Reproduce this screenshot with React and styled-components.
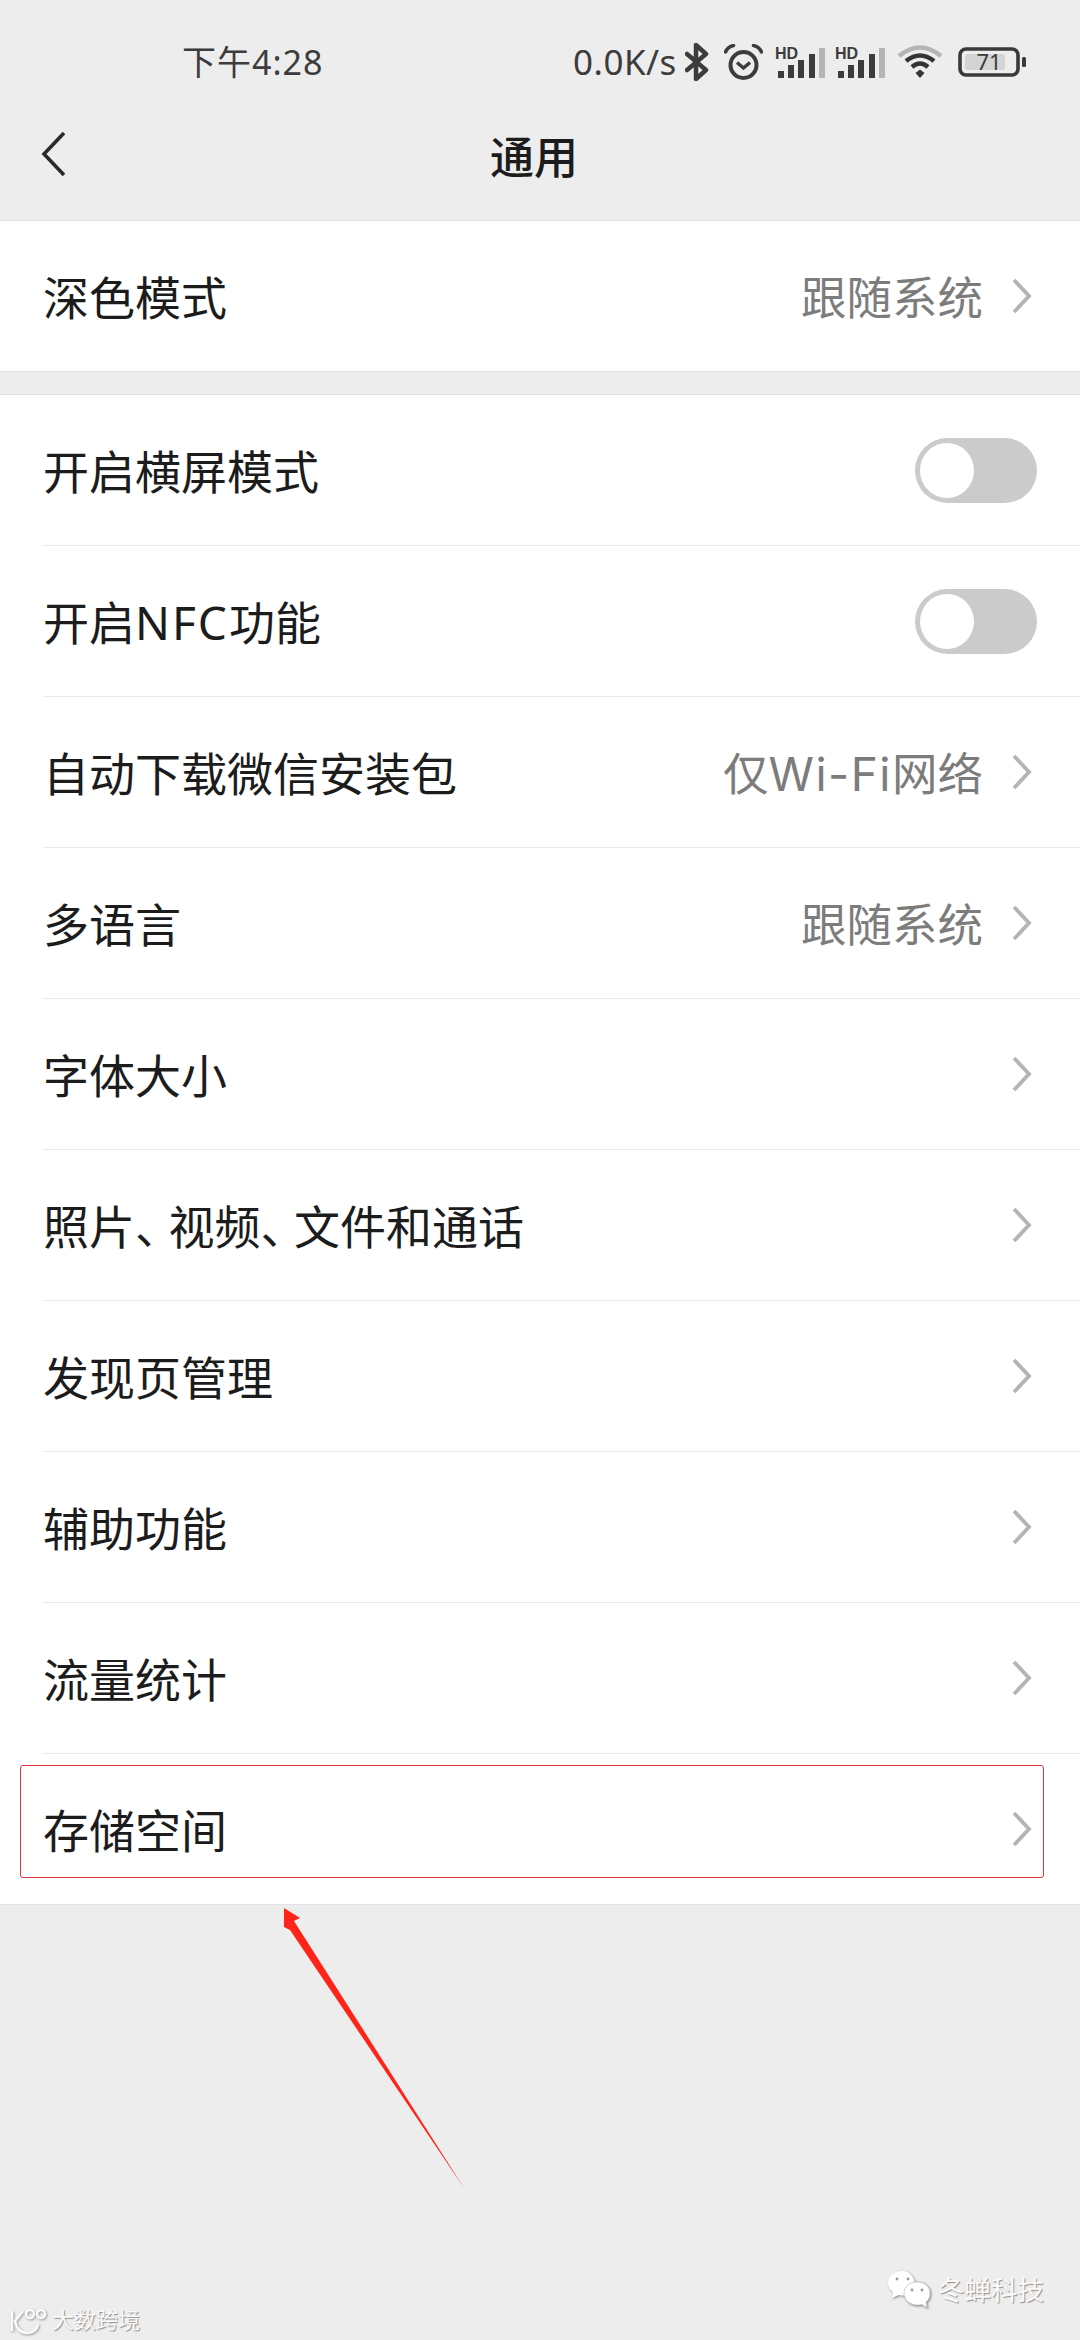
import React from "react";
import styled, { createGlobalStyle } from "styled-components";

const Global = createGlobalStyle`
  html, body { margin: 0; padding: 0; background: #ededed; }
  * { box-sizing: border-box; }
`;
const FONT = `"Noto Sans", "Noto Sans CJK SC", sans-serif`;

const Page = styled.div`
  position: relative;
  width: 1080px;
  height: 2340px;
  background: #ededed;
  font-family: ${FONT};
  overflow: hidden;
`;
const Header = styled.header`
  height: 220px;
  display: flex;
  flex-direction: column;
`;
const StatusBar = styled.div`
  height: 124px;
  display: flex;
  align-items: center;
  justify-content: space-between;
  padding: 0 54px 0 182px;
  color: #3c3c3c;
`;
const Time = styled.span`
  font-size: 34px;
  line-height: 40px;
  letter-spacing: 1px;
  white-space: nowrap;
`;
const StatusIcons = styled.div`
  display: flex;
  align-items: center;
`;
const Speed = styled.span`
  font-size: 35px;
  line-height: 40px;
  letter-spacing: 0.5px;
  width: 112px;
  white-space: nowrap;
`;
const StatusIcon = styled.svg`
  display: block;
  flex: none;
  margin-left: ${(p) => p.$ml || 0}px;
  margin-top: ${(p) => p.$mt || 0}px;
`;
const TitleBar = styled.div`
  position: relative;
  flex: 1;
  display: flex;
  align-items: center;
  justify-content: center;
  padding: 0 12px 30px 0;
`;
const BackIcon = styled.svg`
  position: absolute;
  left: 41px;
  top: 7px;
`;
const Title = styled.h1`
  margin: 0;
  font-size: 44px;
  line-height: 56px;
  font-weight: 500;
  color: #1c1c1c;
`;
const Panel = styled.section`
  background: #fff;
  border-top: 1px solid #e2e2e2;
  border-bottom: 1px solid #e2e2e2;
  margin-bottom: ${(p) => p.$mb || 0}px;
`;
const Row = styled.div`
  padding-left: 43px;
  height: ${(p) => p.$h}px;
`;
const RowInner = styled.div`
  height: 100%;
  display: flex;
  align-items: center;
  justify-content: space-between;
  padding-right: 43px;
  border-bottom: ${(p) => (p.$last ? "none" : "1px solid #e8e8e8")};
`;
const Label = styled.span`
  font-size: 46px;
  line-height: 56px;
  color: #1c1c1c;
  padding-top: 2px;
  white-space: nowrap;
`;
const Latin = styled.span`
  letter-spacing: ${(p) => p.$track}px;
`;
const WideLatin = styled.span`
  font-family: "Inter", sans-serif;
  font-size: 46px;
  letter-spacing: 1.5px;
`;
const Punct = styled.span`
  letter-spacing: -12.5px;
`;
const Right = styled.div`
  display: flex;
  align-items: center;
  gap: 29px;
  margin-right: 5px;
`;
const Value = styled.span`
  font-size: 45.5px;
  line-height: 56px;
  color: #7c7c7c;
  padding-top: 2px;
  white-space: nowrap;
`;
const Toggle = styled.div`
  width: 122px;
  height: 65px;
  border-radius: 33px;
  background: #cbcbcb;
  padding: 5px;
`;
const Knob = styled.div`
  width: 54px;
  height: 55px;
  border-radius: 50%;
  background: #fff;
`;
const Highlight = styled.div`
  position: absolute;
  left: 20px;
  top: 1765px;
  width: 1024px;
  height: 113px;
  border: 1.5px solid #d8383a;
  border-radius: 3px;
`;
const Arrow = styled.svg`
  position: absolute;
  left: 280px;
  top: 1900px;
`;
const MarkText = styled.span`
  position: absolute;
  left: ${(p) => p.$x}px;
  top: ${(p) => p.$y}px;
  font-size: ${(p) => p.$size}px;
  line-height: 1.2;
  color: #fafafa;
  text-shadow: 1px 1px 1px #8f8f8f;
  white-space: nowrap;
`;
const MarkIcon = styled.svg`
  position: absolute;
  left: ${(p) => p.$x}px;
  top: ${(p) => p.$y}px;
`;

const Chevron = () => (
  <svg width="20" height="36" viewBox="0 0 20 36" style={{ display: "block" }}>
    <polyline points="2,2 17,18 2,34" fill="none" stroke="#b4b4b4" strokeWidth="3.8" />
  </svg>
);

const Signal = ({ ml }) => (
  <StatusIcon $ml={ml} $mt={-3} width="50" height="34" viewBox="0 -3 50 34">
    <text x="0" y="12" fontFamily="Liberation Sans, sans-serif" fontWeight="700" fontSize="16" fill="#3c3c3c">HD</text>
    <path d="M3 24h6v7H3z M13 18h6v13h-6z M23 13h6v18h-6z M34 7h6v24h-6z" fill="#3c3c3c" />
    <path d="M44 1h6v30h-6z" fill="#b5b5b5" />
  </StatusIcon>
);

const rows = [
  { id: "landscape", label: "开启横屏模式", toggle: true },
  { id: "nfc", label: <>开启<Latin $track={2}>NFC</Latin>功能</>, toggle: true },
  { id: "update", label: "自动下载微信安装包", value: <>仅<WideLatin>Wi-Fi</WideLatin>网络</> },
  { id: "lang", label: "多语言", value: "跟随系统" },
  { id: "size", label: "字体大小" },
  { id: "media", label: <>照片<Punct>、</Punct>视频<Punct>、</Punct>文件和通话</> },
  { id: "discover", label: "发现页管理" },
  { id: "a11y", label: "辅助功能" },
  { id: "traffic", label: "流量统计" },
  { id: "storage", label: "存储空间", last: true, h: 150 },
];

const SettingRow = ({ label, value, toggle, last, h = 151 }) => (
  <Row $h={h}>
    <RowInner $last={last}>
      <Label>{label}</Label>
      {toggle ? (
        <Toggle>
          <Knob />
        </Toggle>
      ) : (
        <Right>
          {value && <Value>{value}</Value>}
          <Chevron />
        </Right>
      )}
    </RowInner>
  </Row>
);

export default function App() {
  return (
    <Page>
      <Global />
      <Header>
        <StatusBar>
          <Time>下午4:28</Time>
          <StatusIcons>
            <Speed>0.0K/s</Speed>
            <StatusIcon width="24" height="38" viewBox="0 0 24 38">
              <path d="M2 11 L21 27 L11 36 V2 L21 11 L2 27" fill="none" stroke="#3c3c3c" strokeWidth="4.5" strokeLinejoin="round" strokeLinecap="round" />
            </StatusIcon>
            <StatusIcon $ml={15} width="39" height="36" viewBox="0 0 39 36">
              <circle cx="19.5" cy="21" r="13" fill="none" stroke="#3c3c3c" strokeWidth="4" />
              <path d="M13 18.5 L19.5 24 L26 18.5" fill="none" stroke="#3c3c3c" strokeWidth="3.5" />
              <path d="M1.5 8 Q4 2.5 9.5 1.5 M37.5 8 Q35 2.5 29.5 1.5" fill="none" stroke="#3c3c3c" strokeWidth="3.5" strokeLinecap="round" />
            </StatusIcon>
            <Signal ml={12} />
            <Signal ml={10} />
            <StatusIcon $ml={12} width="46" height="34" viewBox="0 0 46 34">
              <path d="M2 11 Q23 -6 44 11" fill="none" stroke="#b5b5b5" strokeWidth="4.5" />
              <path d="M9 16 Q23 5 37 16" fill="none" stroke="#333" strokeWidth="4.5" />
              <path d="M15 22 Q23 15 31 22" fill="none" stroke="#333" strokeWidth="4.5" />
              <path d="M18.5 28 L23 24.5 L27.5 28 L23 33 Z" fill="#333" />
            </StatusIcon>
            <StatusIcon $ml={15} width="68" height="30" viewBox="0 0 68 30">
              <rect x="2" y="2" width="58" height="26" rx="6" fill="none" stroke="#3a3a3a" strokeWidth="3.6" />
              <rect x="7" y="7" width="40" height="16" rx="2" fill="#d4d4d4" />
              <text x="31" y="23" textAnchor="middle" fontFamily="Noto Sans, sans-serif" fontSize="22" fill="#3a3a3a">71</text>
              <rect x="64" y="10" width="4" height="10" rx="1.5" fill="#3a3a3a" />
            </StatusIcon>
          </StatusIcons>
        </StatusBar>
        <TitleBar>
          <BackIcon width="26" height="46" viewBox="0 0 26 46">
            <polyline points="23,2 3,23 23,44" fill="none" stroke="#2a2a2a" strokeWidth="3.6" />
          </BackIcon>
          <Title>通用</Title>
        </TitleBar>
      </Header>

      <Panel $mb={22}>
        <SettingRow label="深色模式" value="跟随系统" last h={150} />
      </Panel>
      <Panel>
        {rows.map(({ id, ...r }) => (
          <SettingRow key={id} {...r} />
        ))}
      </Panel>

      <Highlight />
      <Arrow width="190" height="290" viewBox="0 0 190 290">
        <polygon points="4,8 20,18 14,21 184,288 10,30 4,27" fill="#ff2419" />
      </Arrow>

      <MarkIcon $x={8} $y={2306} width="42" height="30" viewBox="0 0 42 30" fill="none" stroke="#fafafa" strokeWidth="2.5" style={{ filter: "drop-shadow(1px 1px 1px #999)" }}>
        <path d="M4 5v20 M15 5 L7 15 Q9 27 20 27 Q29 26 30 18" />
        <circle cx="22" cy="8" r="4" />
        <circle cx="33" cy="8" r="4" />
      </MarkIcon>
      <MarkText $x={52} $y={2306} $size={22}>大数跨境</MarkText>

      <MarkIcon $x={887} $y={2270} width="44" height="39" viewBox="0 0 44 39" style={{ filter: "drop-shadow(1px 1px 1px #888)" }}>
        <path d="M15 1 C7 1 1 6.500 1 13 C1 17 3 20 6 22 L5 28 L12 25 C15 26 18 25.500 22 25 C32 24 30 1 15 1 Z" fill="#fff" />
        <path d="M30 12 C22 12 17 17 17 23 C17 30 23 35 30 35 C32 35 34 35 35 34.500 L40 38 L39 32 C42 30 43 27 43 23 C43 17 38 12 30 12 Z" fill="#fff" stroke="#bbb" strokeWidth="0.7" />
        <circle cx="10" cy="9" r="1.400" fill="#999" />
        <circle cx="21" cy="9" r="1.400" fill="#999" />
        <circle cx="25" cy="20" r="1.400" fill="#999" />
        <circle cx="35" cy="20" r="1.400" fill="#999" />
      </MarkIcon>
      <MarkText $x={938} $y={2275} $size={26.5}>冬蝉科技</MarkText>
    </Page>
  );
}
